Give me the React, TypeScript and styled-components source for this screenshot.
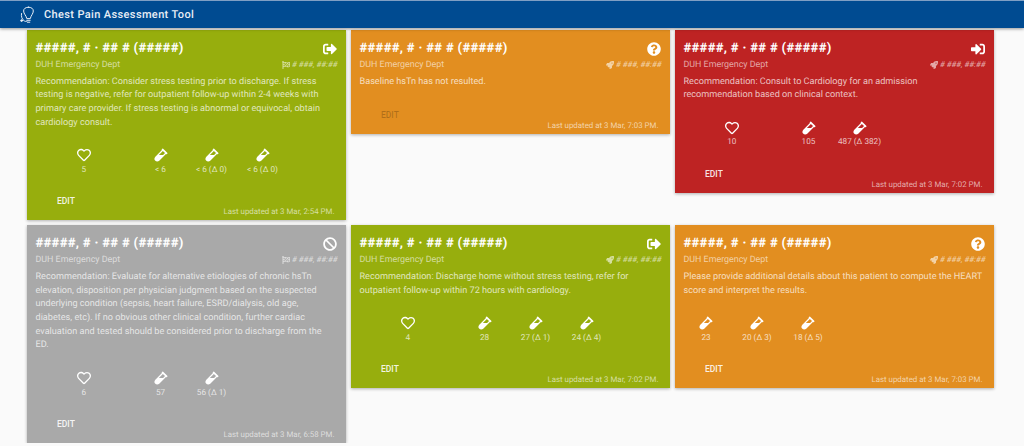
import React from 'react';
import styled, { createGlobalStyle } from 'styled-components';
import {
  FaSignOutAlt,
  FaSignInAlt,
  FaQuestionCircle,
  FaBan,
  FaRegHeart,
  FaVial,
  FaFlagCheckered,
  FaRocket,
} from 'react-icons/fa';

const GlobalStyle = createGlobalStyle`
  html, body {
    margin: 0;
    padding: 0;
    background: #fafafa;
    font-family: Roboto, "Liberation Sans", sans-serif;
    text-rendering: geometricPrecision;
  }
`;

const Header = styled.header`
  height: 27px;
  padding-left: 20px;
  display: flex;
  align-items: center;
  gap: 10px;
  background: #004b91;
  border-top: 1px solid #7f9fc4;
  box-shadow: 0 1px 3px rgba(0, 0, 0, 0.4);
  position: relative;
`;

const HeaderTitle = styled.h1`
  margin: 0;
  color: #e8eef6;
  font-size: 11px;
  font-weight: 500;
  letter-spacing: 0.37px;
`;

const Grid = styled.main`
  display: grid;
  grid-template-columns: repeat(3, 319px);
  column-gap: 5px;
  row-gap: 5px;
  align-items: start;
  padding: 2px 0 0 26.5px;
`;

const colors = {
  green: '#97ae0d',
  orange: '#e28e20',
  red: '#be2323',
  gray: '#a9a9a9',
};

type Tone = keyof typeof colors;

const Card = styled.article<{ $tone: Tone }>`
  background: ${({ $tone }) => colors[$tone]};
  padding: 10px 0 3px;
  color: rgba(255, 255, 255, 0.72);
  box-shadow: 0 1px 3px rgba(0, 0, 0, 0.3);
`;

const TopRow = styled.div`
  display: flex;
  justify-content: space-between;
  align-items: center;
  padding: 0 9px;
  height: 18px;
`;

const Name = styled.h2`
  margin: 0;
  color: #fff;
  font-size: 13.1px;
  font-weight: 700;
  line-height: 18px;
  letter-spacing: 0.3px;
`;

const StatusIcon = styled.span`
  display: flex;
  color: #fff;
  font-size: 14px;
`;

const SubRow = styled.div`
  display: flex;
  justify-content: space-between;
  align-items: center;
  margin-top: 1px;
  padding: 0 8px 0 9px;
  height: 12px;
  font-size: 8.9px;
  line-height: 12px;
  color: rgba(255, 255, 255, 0.6);
`;

const Arrival = styled.span`
  display: flex;
  align-items: center;
  gap: 2px;
  font-size: 8px;
  font-style: italic;
`;

const ArrivalIcon = styled.span`
  display: flex;
  font-size: 8px;
`;

const Message = styled.p`
  margin: 4.5px 0 0;
  padding: 0 9px;
  font-size: 9.15px;
  line-height: 13.7px;
`;

const Metrics = styled.div`
  display: flex;
  margin-top: 17.5px;
  padding-left: 6px;
`;

const Metric = styled.div<{ $wide?: boolean }>`
  width: ${({ $wide }) => ($wide ? '102.5px' : '51px')};
  display: flex;
  flex-direction: column;
  align-items: center;
  white-space: nowrap;
  font-size: 8.2px;
  line-height: 12px;
`;

const MetricIcon = styled.span`
  display: flex;
  align-items: center;
  justify-content: center;
  height: 15px;
  margin-bottom: 1px;
  color: #fff;
  font-size: 14px;
`;

const EditButton = styled.button<{ $off?: boolean }>`
  display: block;
  margin: 19.5px 0 0 30.5px;
  padding: 0;
  border: 0;
  background: none;
  font-family: inherit;
  font-size: 8.5px;
  font-weight: 500;
  line-height: 12px;
  text-transform: uppercase;
  color: ${({ $off }) => ($off ? 'rgba(0, 0, 0, 0.22)' : 'rgba(255, 255, 255, 0.9)')};
`;

const Updated = styled.div`
  padding-right: 11px;
  text-align: right;
  font-size: 7.9px;
  line-height: 10px;
  color: rgba(255, 255, 255, 0.62);
`;

const LogoSvg = styled.svg`
  width: 14px;
  height: 18px;
  flex: none;
`;

const Logo = () => (
  <LogoSvg viewBox="0 0 14 18" fill="none" stroke="#e8eef6" strokeWidth="1" strokeLinecap="round">
    <path d="M8.5 1.2c2.8 0 4.8 1.4 4.8 3.8 0 2.8-2.4 4.4-3 7.6H6.8C6.2 9.4 3.6 7.8 3.6 5c0-2.4 2.1-3.8 4.9-3.8z" />
    <path d="M6.8 14.3h3.4M7.4 16.2h2.4" />
    <path d="M1.5 7.5c-.5 3 .4 6 3 7.5 1 .6 1.8.5 2.4.2" />
    <circle cx="1.6" cy="14.6" r="0.9" fill="#e8eef6" />
  </LogoSvg>
);

type Status = 'out' | 'in' | 'unknown' | 'ban';

const statusIcons = {
  out: <FaSignOutAlt />,
  in: <FaSignInAlt />,
  unknown: <FaQuestionCircle />,
  ban: <FaBan />,
};

type PatientCard = {
  tone: Tone;
  status: Status;
  arrival: 'flag' | 'rocket';
  message: string;
  heart?: string;
  labs?: string[];
  updated: string;
  editOff?: boolean;
};

const cards: PatientCard[] = [
  {
    tone: 'green',
    status: 'out',
    arrival: 'flag',
    message:
      'Recommendation: Consider stress testing prior to discharge. If stress testing is negative, refer for outpatient follow-up within 2-4 weeks with primary care provider. If stress testing is abnormal or equivocal, obtain cardiology consult.',
    heart: '5',
    labs: ['< 6', '< 6 (Δ 0)', '< 6 (Δ 0)'],
    updated: '3 Mar, 2:54 PM.',
  },
  {
    tone: 'orange',
    status: 'unknown',
    arrival: 'rocket',
    message: 'Baseline hsTn has not resulted.',
    updated: '3 Mar, 7:03 PM.',
    editOff: true,
  },
  {
    tone: 'red',
    status: 'in',
    arrival: 'rocket',
    message:
      'Recommendation: Consult to Cardiology for an admission recommendation based on clinical context.',
    heart: '10',
    labs: ['105', '487 (Δ 382)'],
    updated: '3 Mar, 7:02 PM.',
  },
  {
    tone: 'gray',
    status: 'ban',
    arrival: 'flag',
    message:
      'Recommendation: Evaluate for alternative etiologies of chronic hsTn elevation, disposition per physician judgment based on the suspected underlying condition (sepsis, heart failure, ESRD/dialysis, old age, diabetes, etc). If no obvious other clinical condition, further cardiac evaluation and tested should be considered prior to discharge from the ED.',
    heart: '6',
    labs: ['57', '56 (Δ 1)'],
    updated: '3 Mar, 6:58 PM.',
  },
  {
    tone: 'green',
    status: 'out',
    arrival: 'rocket',
    message:
      'Recommendation: Discharge home without stress testing, refer for outpatient follow-up within 72 hours with cardiology.',
    heart: '4',
    labs: ['28', '27 (Δ 1)', '24 (Δ 4)'],
    updated: '3 Mar, 7:02 PM.',
  },
  {
    tone: 'orange',
    status: 'unknown',
    arrival: 'rocket',
    message:
      'Please provide additional details about this patient to compute the HEART score and interpret the results.',
    labs: ['23', '20 (Δ 3)', '18 (Δ 5)'],
    updated: '3 Mar, 7:03 PM.',
  },
];

const App = () => (
  <>
    <GlobalStyle />
    <Header>
      <Logo />
      <HeaderTitle>Chest Pain Assessment Tool</HeaderTitle>
    </Header>
    <Grid>
      {cards.map((card, i) => (
        <Card key={i} $tone={card.tone}>
          <TopRow>
            <Name>#####, # · ## # (#####)</Name>
            <StatusIcon>{statusIcons[card.status]}</StatusIcon>
          </TopRow>
          <SubRow>
            <span>DUH Emergency Dept</span>
            <Arrival>
              <ArrivalIcon>
                {card.arrival === 'flag' ? <FaFlagCheckered /> : <FaRocket />}
              </ArrivalIcon>
              # ###, ##:##
            </Arrival>
          </SubRow>
          <Message>{card.message}</Message>
          {(card.heart || card.labs) && (
            <Metrics>
              {card.heart && (
                <Metric $wide>
                  <MetricIcon>
                    <FaRegHeart />
                  </MetricIcon>
                  {card.heart}
                </Metric>
              )}
              {card.labs?.map((lab) => (
                <Metric key={lab}>
                  <MetricIcon>
                    <FaVial />
                  </MetricIcon>
                  {lab}
                </Metric>
              ))}
            </Metrics>
          )}
          <EditButton $off={card.editOff}>Edit</EditButton>
          <Updated>Last updated at {card.updated}</Updated>
        </Card>
      ))}
    </Grid>
  </>
);

export default App;
